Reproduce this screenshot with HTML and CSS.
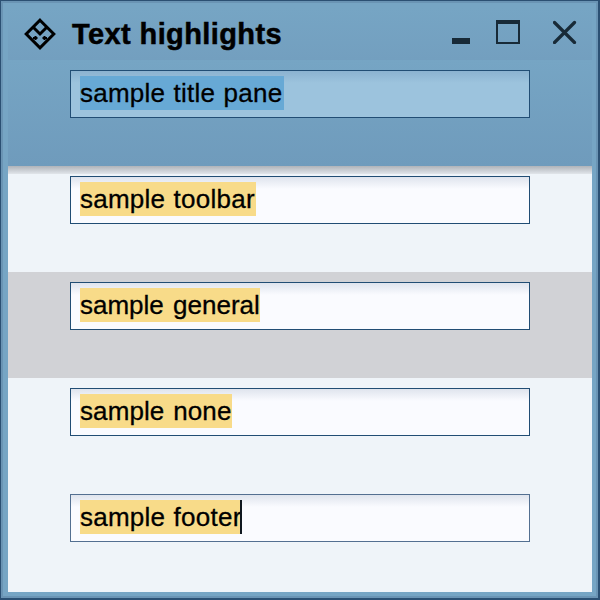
FILE: index.html
```html
<!DOCTYPE html>
<html lang="en">
<head>
<meta charset="utf-8">
<title>Text highlights</title>
<link rel="stylesheet" href="styles.css">
</head>
<body>
<div class="window">
  <div class="frame">
    <div class="content">
      <header class="titlebar">
        <svg class="logo" width="32" height="32" viewBox="0 0 32 32" fill="none" stroke="#000" stroke-width="3">
          <path d="M16 2.200 29.800 16 16 29.800 2.200 16Z"/>
          <path d="M9.500 9.500 16 16 22.500 9.500"/>
          <path d="M11.500 18v4M9 20h4.500M20.500 18v4M18.500 20h4.500" stroke-width="2"/>
        </svg>
        <h1 class="title">Text highlights</h1>
        <div class="controls">
          <svg width="18" height="24" viewBox="0 0 18 24"><path d="M0 18h18v6H0z" fill="#182a37"/></svg>
          <svg width="24" height="24" viewBox="0 0 24 24"><path d="M0 0h24v24H0zM2 4v18h20V4z" fill="#182a37" fill-rule="evenodd"/></svg>
          <svg width="24" height="24" viewBox="0 0 24 24"><path d="M1.500 2.500 21.500 22.500M21.500 2.500 1.500 22.500" stroke="#182a37" stroke-width="3.200" stroke-linecap="round"/></svg>
        </div>
      </header>
      <section class="band band-title"><div class="field field-title"><span class="mark w-title">sample title pane</span></div></section>
      <section class="band band-toolbar"><div class="field"><span class="mark w-toolbar">sample toolbar</span></div></section>
      <section class="band band-general"><div class="field"><span class="mark w-general">sample general</span></div></section>
      <section class="band"><div class="field"><span class="mark w-none">sample none</span></div></section>
      <section class="band"><div class="field field-footer"><span class="mark w-footer">sample footer</span><span class="caret"></span></div></section>
    </div>
  </div>
</div>
</body>
</html>
```
FILE: styles.css
```css
* { box-sizing: border-box; }
body { margin: 0; font-family: "Liberation Sans", Arial, sans-serif; color: #000; }
.window {
  width: 600px;
  height: 600px;
  border: solid #2b5073;
  border-width: 1px 2px 2px 1px;
}
.frame {
  height: 100%;
  border: 2px solid #6a94b4;
  background: #76a5c4;
  padding: 5px 4px 4px 5px;
}
.content { height: 584px; background: #eff4f9; overflow: hidden; }
.titlebar {
  height: 52px;
  display: flex;
  align-items: center;
  padding: 0 15px 0 16px;
  background: linear-gradient(#76a5c4, #739fbf);
}
.logo { flex: none; }
.title {
  margin: 0 0 0 16px;
  font-size: 29px;
  line-height: 32px;
  letter-spacing: 0.4px;
  -webkit-text-stroke: 0.5px #000;
  white-space: nowrap;
}
.controls { display: flex; margin-left: auto; padding-bottom: 4px; }
.controls svg + svg { margin-left: 26px; }
.controls svg:last-child { margin-left: 33px; }
.band { height: 106px; padding: 10px 62px 0; }
.band-title { background: linear-gradient(#76a5c4, #6f9bbc); }
.band-toolbar { background: linear-gradient(#afb3b9, #e1e5ea) no-repeat 0 0 / 100% 8px; }
.band-general { background: #d1d2d6; }
.field {
  display: flex;
  height: 48px;
  padding: 5px 9px;
  border: 1px solid #214d74;
  background: linear-gradient(#dfe4ed, #fafbff 12px);
}
.field-title { background: linear-gradient(#8bb2d0, #9cc3dd 12px); }
.field-footer { border-color: #536f91; }
.mark {
  height: 34px;
  background: #f8db89;
  font-size: 26px;
  line-height: 34px;
  letter-spacing: 0.25px;
  word-spacing: 0.8px;
  -webkit-text-stroke: 0.3px #000;
  white-space: nowrap;
}
.field-title .mark { background: #67a9d5; }
.w-title { width: 204px; }
.w-toolbar { width: 176px; }
.w-general { width: 180px; letter-spacing: 0; word-spacing: 2px; }
.w-none { width: 152px; letter-spacing: 0.1px; word-spacing: 1.5px; }
.w-footer { width: 160px; }
.caret { width: 2px; height: 34px; background: #101820; }
```
